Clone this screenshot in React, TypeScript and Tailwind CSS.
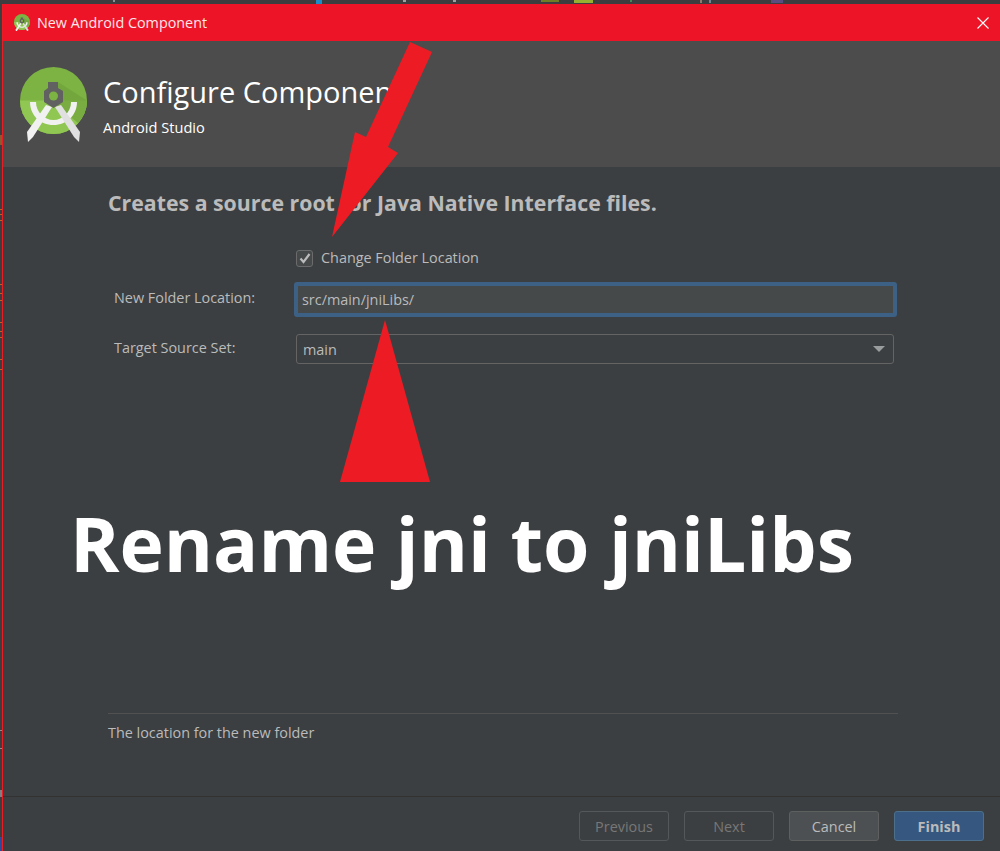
const segoe = "font-['Open_Sans','Noto_Sans',sans-serif]";

function StudioLogo({ width }: { width: number }) {
  return (
    <svg width={width} height={(width * 75) / 67} viewBox="0 0 67 75">
      <circle cx="33.5" cy="33.5" r="33.5" fill="#7cb342" />
      <path d="M0 33.5a33.5 33.5 0 0 0 67 0z" fill="#90c652" />
      <path d="M38 15l29 18.5a33.5 33.5 0 0 1-9 22.5L36 38z" fill="#6fa33c" opacity="0.7" />
      <path d="M10 35c0 13 10 23 23.500 23S57 48 57 35h-6c0 10-8 18-17.500 18S16 45 16 35z" fill="#f1f1f1" />
      <path d="M26 38L7 65l1 10 5-5 19-30z" fill="#f1f1f1" />
      <path d="M41 38l19 27-1 10-5-5-19-30z" fill="#e0e0e0" />
      <path d="M28 15h10v6l5 3v11l-9.500 6L24 35V24l4-3z" fill="#616161" />
      <circle cx="33.5" cy="29" r="4.500" fill="#7cb342" />
    </svg>
  );
}

function FormRow({ label, children }: { label: string; children: React.ReactNode }) {
  return (
    <div className="flex items-center">
      <div className="w-[186px] pb-[3px] pl-[6px] text-[14.4px] text-[#bbbbbb]">{label}</div>
      {children}
    </div>
  );
}

function WizardButton({ label, kind }: { label: string; kind: "off" | "normal" | "primary" }) {
  const styles = {
    off: "border-[#55585a] text-[#777777]",
    normal: "border-[#5e6060] bg-[#4c5052] text-[#bbbbbb]",
    primary: "border-[#4c708c] bg-[#365880] font-bold text-[#bbbbbb]",
  };
  return (
    <button className={`h-[30px] w-[90px] rounded-[3px] border pt-[1px] text-[14.4px] ${styles[kind]}`}>{label}</button>
  );
}

export default function App() {
  return (
    <div className={`relative h-[851px] w-[1000px] overflow-hidden bg-[#3b3d3e] ${segoe}`}>
      {/* bits of the IDE window behind the dialog */}
      <div className="flex h-[4px] items-start">
        <span className="ml-[113px] h-[2px] w-[2px] bg-[#8a9099]" />
        <span className="ml-[201px] h-[4px] w-[6px] bg-[#1b8cc8]" />
        <span className="ml-[81px] h-[2px] w-[3px] bg-[#a0a0a0]" />
        <span className="ml-[47px] h-[2px] w-[3px] bg-[#a0a0a0]" />
        <span className="ml-[85px] h-[2px] w-[18px] bg-[#6f7d25]" />
        <span className="ml-[15px] h-[3px] w-[19px] bg-[#96b032]" />
        <span className="ml-[37px] h-[2px] w-[2px] bg-[#3f8a55]" />
        <span className="ml-[68px] h-[3px] w-[2px] bg-[#8f7a6c]" />
        <span className="ml-[7px] h-[3px] w-[2px] bg-[#6f8796]" />
        <span className="ml-[60px] h-[3px] w-[12px] bg-[#5a4d80]" />
      </div>

      <div className="flex h-[847px]">
        <div className="flex w-[2px] flex-col">
          <span className="mt-[131px] h-[10px] bg-[#8a5a30]" />
          <span className="mt-[64px] h-[1px] bg-[#b8642a]" />
          <span className="mt-[4px] h-[1px] bg-[#b8642a]" />
          <span className="mt-[5px] h-[1px] bg-[#b8642a]" />
          <span className="mt-[63px] h-[1px] bg-[#b8642a]" />
          <span className="mt-[8px] h-[1px] bg-[#b8642a]" />
          <span className="mt-[6px] h-[1px] bg-[#b8642a]" />
          <span className="mt-[21px] h-[1px] bg-[#b8642a]" />
          <span className="mt-[8px] h-[1px] bg-[#b8642a]" />
          <span className="mt-[5px] h-[1px] bg-[#b8642a]" />
          <span className="mt-[21px] h-[1px] bg-[#b8642a]" />
          <span className="mt-[9px] h-[1px] bg-[#b8642a]" />
          <span className="mt-[360px] h-[1px] bg-[#8a8f96]" />
          <span className="mt-[17px] h-[1px] bg-[#8a8f96]" />
          <span className="mt-[41px] h-[7px] bg-[#7d8186]" />
          <span className="mt-[40px] h-[14px] bg-[#2a4a9a]" />
        </div>

        <div className="flex flex-1 flex-col border-l border-[#ec1c24] bg-[#3c3f41]">
          {/* Title bar */}
          <div className="flex h-[37px] items-center bg-[#ec1426] pl-[11px] pr-[11px] text-[#ffe6ea]">
            <StudioLogo width={16} />
            <span className="ml-[7px] pt-[1px] text-[14.35px]">New Android Component</span>
            <svg className="ml-auto mt-[1px]" width="12" height="12" viewBox="0 0 12 12">
              <path d="M.5.5l11 11M11.500.5l-11 11" stroke="#ffffff" strokeWidth="1.1" fill="none" />
            </svg>
          </div>

          {/* Header */}
          <div className="flex h-[126px] bg-[#4c4c4c] pl-[17px]">
            <div className="pt-[26px]">
              <StudioLogo width={67} />
            </div>
            <div className="ml-[16px] pt-[29px] text-white">
              <div className="text-[29px] leading-[44px]">Configure Component</div>
              <div className="mt-[3px] text-[14.6px] leading-[20px]">Android Studio</div>
            </div>
          </div>

          {/* Body */}
          <div className="flex flex-1 flex-col pl-[105px] pr-[102px]">
            <h1 className="pt-[22px] text-[21.3px] font-bold leading-[28px] text-[#bbbbbb]">
              Creates a source root for Java Native Interface files.
            </h1>

            <label className="ml-[188px] mt-[32px] flex h-[18px] items-center text-[14.4px] text-[#bbbbbb]">
              <span className="flex h-[17px] w-[17px] items-center justify-center rounded-[3px] border border-[#6b6b6b] bg-[#45494a]">
                <svg width="12" height="11" viewBox="0 0 12 11">
                  <path d="M1.500 5.500l3 3.500L10.500 1" stroke="#bbbbbb" strokeWidth="2.200" fill="none" />
                </svg>
              </span>
              <span className="ml-[8px]">Change Folder Location</span>
            </label>

            <div className="mt-[15px]">
              <FormRow label="New Folder Location:">
                <div className="flex h-[35px] w-[603px] items-center rounded-[3px] border-[4px] border-[#3d6185] bg-[#45494a] pl-[4px] text-[14.4px] text-[#bbbbbb]">
                  src/main/jniLibs/
                </div>
              </FormRow>
            </div>
            <div className="mt-[17px]">
              <FormRow label="Target Source Set:">
                <div className="ml-[2px] flex h-[30px] w-[598px] items-center justify-between rounded-[3px] border border-[#646464] bg-[#3c3f41] pl-[6px] pr-[8px] text-[14.4px] text-[#bbbbbb]">
                  <span className="pt-[2px]">main</span>
                  <span className="h-0 w-0 border-x-[6px] border-t-[6px] border-x-transparent border-t-[#9a9d9e]" />
                </div>
              </FormRow>
            </div>

            <div className="mt-auto h-[83px] border-t border-[#515151] pt-[9px] text-[14.4px] leading-[20px] text-[#bbbbbb]">
              The location for the new folder
            </div>
          </div>

          {/* Footer */}
          <div className="flex h-[55px] items-start justify-end gap-[15px] border-t border-[#323232] pr-[16px] pt-[14px]">
            <WizardButton label="Previous" kind="off" />
            <WizardButton label="Next" kind="off" />
            <WizardButton label="Cancel" kind="normal" />
            <WizardButton label="Finish" kind="primary" />
          </div>
        </div>
      </div>

      {/* annotations drawn over the dialog */}
      <svg className="absolute left-0 top-0" width="1000" height="851" viewBox="0 0 1000 851">
        <path d="M410 42L432 52 388 147 398 153 332 237 355 132 366 137z" fill="#ed1c24" />
        <path d="M385 320L430 482H340z" fill="#ed1c24" />
      </svg>
      <div className="absolute left-[70px] top-[495px] text-[75px] font-bold leading-[96px] text-white">
        Rename jni to jniLibs
      </div>
    </div>
  );
}
